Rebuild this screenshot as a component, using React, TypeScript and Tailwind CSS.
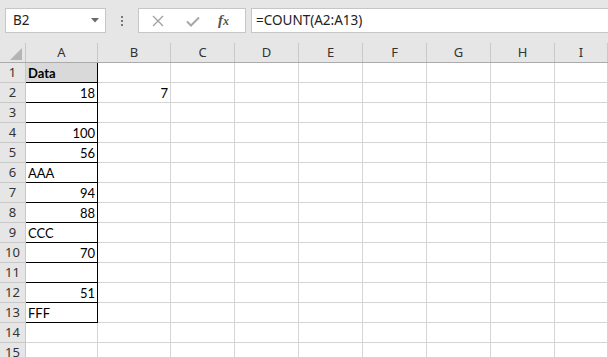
import React from "react";

const cols = ["A", "B", "C", "D", "E", "F", "G", "H", "I"];
const colW = [72, 73, 64, 64, 64, 64, 64, 64, 53];

type Cell = { v: string; right?: boolean; bold?: boolean };
const aData: Record<number, Cell> = {
  1: { v: "Data", bold: true },
  2: { v: "18", right: true },
  4: { v: "100", right: true },
  5: { v: "56", right: true },
  6: { v: "AAA" },
  7: { v: "94", right: true },
  8: { v: "88", right: true },
  9: { v: "CCC" },
  10: { v: "70", right: true },
  12: { v: "51", right: true },
  13: { v: "FFF" },
};

export default function App() {
  const rows = Array.from({ length: 15 }, (_, i) => i + 1);
  return (
    <div className="w-[608px] h-[357px] overflow-hidden bg-white" style={{ fontFamily: "Lato, 'Liberation Sans', sans-serif" }}>
      {/* Formula bar area */}
      <div className="h-[43px] bg-[#e6e6e6] pt-[8px] pl-[5px] flex items-start">
        <div className="w-[101px] h-[25px] bg-white border border-[#c6c6c6] flex items-center justify-between pl-[7px] pr-[6px]">
          <span className="text-[13.5px] text-[#222]" style={{ fontFamily: "'Noto Sans', sans-serif" }}>B2</span>
          <svg width="8" height="5" viewBox="0 0 8 5"><path d="M0 0h8L4 4.5z" fill="#6a6a6a" /></svg>
        </div>
        <div className="w-[32px] h-[25px] flex flex-col items-center justify-center gap-[2px]">
          <div className="w-[2px] h-[2px] bg-[#777]" />
          <div className="w-[2px] h-[2px] bg-[#777]" />
          <div className="w-[2px] h-[2px] bg-[#777]" />
        </div>
        <div className="w-[108px] h-[25px] bg-white border border-[#c6c6c6] flex items-center">
          <svg width="12" height="12" viewBox="0 0 12 12" className="ml-[13px]">
            <path d="M1 1L11 11M11 1L1 11" stroke="#a0a0a0" strokeWidth="1.3" />
          </svg>
          <svg width="14" height="12" viewBox="0 0 14 12" className="ml-[22px]">
            <path d="M1 6.5L5 10.5L13 2.5" stroke="#a8a8a8" strokeWidth="2" fill="none" />
          </svg>
          <span className="ml-[18px] text-[15px] italic font-bold text-[#555]" style={{ fontFamily: "'Liberation Serif', serif" }}>
            f<span className="text-[12px]">x</span>
          </span>
        </div>
        <div className="ml-[5px] flex-1 h-[25px] bg-white border border-[#c6c6c6] border-r-0 flex items-center pl-[4px]">
          <span className="text-[13.5px] text-[#222]" style={{ fontFamily: "'Noto Sans', sans-serif" }}>=COUNT(A2:A13)</span>
        </div>
      </div>

      {/* Column headers */}
      <div className="flex h-[20px] bg-[#e6e6e6] border-b border-[#ababab]" style={{ fontFamily: "'Noto Sans', sans-serif" }}>
        <div className="w-[26px] shrink-0 border-r border-[#c8c8c8] relative">
          <svg width="12" height="12" viewBox="0 0 12 12" className="absolute left-[10px] top-[5px]">
            <path d="M12 0V12H0z" fill="#b4b4b4" />
          </svg>
        </div>
        {cols.map((c, i) => (
          <div
            key={c}
            className="shrink-0 border-r border-[#c8c8c8] flex items-center justify-center text-[13px] text-[#333]"
            style={{ width: colW[i] }}
          >
            {c}
          </div>
        ))}
      </div>

      {/* Rows */}
      {rows.map((r) => {
        const a = aData[r];
        const inData = r <= 13;
        return (
          <div key={r} className="flex h-[20px]">
            <div
              className="w-[26px] shrink-0 bg-[#e6e6e6] border-r border-b border-[#c8c8c8] flex items-center justify-center text-[13px] text-[#333]"
              style={{ fontFamily: "'Noto Sans', sans-serif" }}
            >
              {r}
            </div>
            {cols.map((c, i) => {
              const isA = i === 0;
              const border = isA && inData ? "border-r border-b border-black" : "border-r border-b border-[#d4d4d4]";
              const bg = isA && r === 1 ? "bg-[#d9d9d9]" : "";
              let content: React.ReactNode = null;
              let right = false;
              let bold = false;
              if (isA && a) {
                content = a.v;
                right = !!a.right;
                bold = !!a.bold;
              }
              if (c === "B" && r === 2) {
                content = "7";
                right = true;
              }
              return (
                <div
                  key={c}
                  className={`shrink-0 ${border} ${bg} flex items-end pb-[1px] text-[13px] text-black leading-[16px] ${right ? "justify-end pr-[2px]" : "justify-start pl-[2px]"} ${bold ? "font-bold" : ""}`}
                  style={{ width: colW[i] }}
                >
                  {content}
                </div>
              );
            })}
          </div>
        );
      })}
    </div>
  );
}
